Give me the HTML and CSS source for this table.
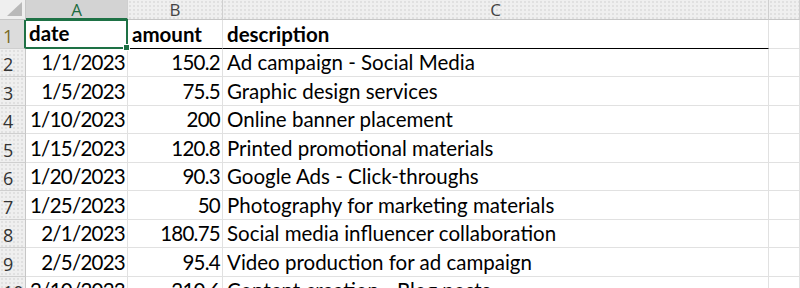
FILE: index.html
```html
<!DOCTYPE html>
<html>
<head>
<meta charset="utf-8">
<link rel="stylesheet" href="styles.css">
</head>
<body>
<div class="sheet">
  <div class="corner"><div class="tri"></div></div>
  <div class="colhdr sel">A</div>
  <div class="colhdr">B</div>
  <div class="colhdr">C</div>
  <div class="colhdr"></div>

  <div class="rowhdr sel r29">1</div>
  <div class="cell bold r29 top selcell">date<span class="handle"></span></div>
  <div class="cell bold r29 thick">amount</div>
  <div class="cell bold r29 thick">description</div>
  <div class="cell r29"></div>

  <div class="rowhdr r28">2</div>
  <div class="cell num r28">1/1/2023</div>
  <div class="cell num r28">150.2</div>
  <div class="cell r28">Ad campaign - Social Media</div>
  <div class="cell r28"></div>

  <div class="rowhdr r29">3</div>
  <div class="cell num r29">1/5/2023</div>
  <div class="cell num r29">75.5</div>
  <div class="cell r29">Graphic design services</div>
  <div class="cell r29"></div>

  <div class="rowhdr r28">4</div>
  <div class="cell num r28">1/10/2023</div>
  <div class="cell num r28">200</div>
  <div class="cell r28">Online banner placement</div>
  <div class="cell r28"></div>

  <div class="rowhdr r29">5</div>
  <div class="cell num r29">1/15/2023</div>
  <div class="cell num r29">120.8</div>
  <div class="cell r29">Printed promotional materials</div>
  <div class="cell r29"></div>

  <div class="rowhdr r28">6</div>
  <div class="cell num r28">1/20/2023</div>
  <div class="cell num r28">90.3</div>
  <div class="cell r28">Google Ads - Click-throughs</div>
  <div class="cell r28"></div>

  <div class="rowhdr r29">7</div>
  <div class="cell num r29">1/25/2023</div>
  <div class="cell num r29">50</div>
  <div class="cell r29">Photography for marketing materials</div>
  <div class="cell r29"></div>

  <div class="rowhdr r28">8</div>
  <div class="cell num r28">2/1/2023</div>
  <div class="cell num r28">180.75</div>
  <div class="cell r28">Social media influencer collaboration</div>
  <div class="cell r28"></div>

  <div class="rowhdr r29">9</div>
  <div class="cell num r29">2/5/2023</div>
  <div class="cell num r29">95.4</div>
  <div class="cell r29">Video production for ad campaign</div>
  <div class="cell r29"></div>

  <div class="rowhdr r28">10</div>
  <div class="cell num r28">2/10/2023</div>
  <div class="cell num r28">210.6</div>
  <div class="cell r28">Content creation - Blog posts</div>
  <div class="cell r28"></div>
</div>
</body>
</html>
```
FILE: styles.css
```css
html, body {
  margin: 0;
  padding: 0;
  background: #ffffff;
  overflow: hidden;
}
.sheet {
  display: grid;
  grid-template-columns: 26px 102px 95px 546px 1fr;
  grid-auto-rows: auto;
  width: 800px;
  font-family: Lato, "Open Sans", sans-serif;
  font-size: 20.5px;
  color: #000;
}
.corner {
  height: 20px;
  box-sizing: border-box;
  background: #efefef;
  border-right: 1px solid #c6c6c6;
  border-bottom: 1px solid #c6c6c6;
  position: relative;
}
.tri {
  position: absolute;
  right: 3px;
  bottom: 3px;
  width: 0;
  height: 0;
  border-left: 15px solid transparent;
  border-bottom: 14px solid #b9b9b9;
}
.colhdr {
  height: 20px;
  box-sizing: border-box;
  background-color: #efefef;
  background-image: radial-gradient(circle, #e0e0e0 0.8px, transparent 1px);
  background-size: 4px 4px;
  border-right: 1px solid #cfcfcf;
  border-bottom: 1px solid #c6c6c6;
  display: flex;
  align-items: center;
  justify-content: center;
  font-family: "Open Sans", Lato, sans-serif;
  font-size: 17px;
  color: #444;
  line-height: 19px;
}
.colhdr.sel {
  background-color: #d3d3d3;
  background-image: none;
  color: #1d6b3f;
  border-bottom: 2px solid #1e7145;
}
.rowhdr {
  box-sizing: border-box;
  background-color: #efefef;
  background-image: radial-gradient(circle, #e0e0e0 0.8px, transparent 1px);
  background-size: 4px 4px;
  border-right: 1px solid #c6c6c6;
  border-bottom: 1px solid #cfcfcf;
  display: flex;
  align-items: flex-end;
  padding: 0 0 3px 3px;
  font-family: "Open Sans", Lato, sans-serif;
  font-size: 18px;
  color: #333;
  line-height: 1;
}
.rowhdr.sel {
  background-color: #dcdcdc;
  background-image: none;
  color: #7a6a1e;
  border-right: 2px solid #1e7145;
}
.r29 { height: 29px; }
.r28 { height: 28px; }
.cell {
  box-sizing: border-box;
  border-right: 1px solid #e1e1e1;
  border-bottom: 1px solid #e1e1e1;
  display: flex;
  align-items: flex-end;
  padding: 0 3px 4px 4px;
  white-space: nowrap;
  overflow: visible;
  line-height: 1;
}
.bold { font-weight: 700; }
.num {
  justify-content: flex-end;
  letter-spacing: -0.75px;
  padding-right: 2px;
}
.thick { border-bottom: 1px solid #000; }
.selcell {
  position: relative;
  border: 2px solid #1e7145;
  border-left: none;
  margin-top: -1px;
  height: 30px;
  padding-left: 3px;
}
.handle {
  position: absolute;
  right: -4px;
  bottom: -4px;
  width: 5px;
  height: 5px;
  background: #1e7145;
  border: 1px solid #fff;
}
```
